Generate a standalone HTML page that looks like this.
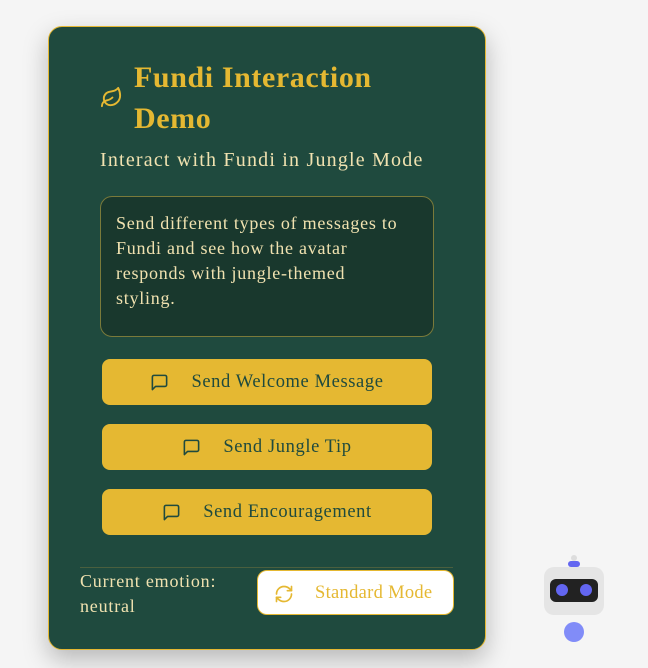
<!DOCTYPE html>
<html><head><style>
*{box-sizing:border-box;margin:0;padding:0}
body{width:648px;height:668px;background:#f5f5f5;font-family:"Liberation Serif",serif;position:relative;overflow:hidden}
.card{position:absolute;left:48px;top:26px;width:438px;height:624px;background:#1f4a3e;border:1.5px solid #e5b832;border-radius:14px;box-shadow:0 10px 25px rgba(0,0,0,.25)}
.abs{position:absolute;white-space:nowrap}
h1{position:absolute;left:134px;top:57px;color:#e5b832;font-size:30px;font-weight:bold;line-height:41px;letter-spacing:0.6px}
.sub{left:100px;top:149px;color:#f0e2b0;font-size:20px;letter-spacing:1.2px}
.box{left:100px;top:196px;width:334px;height:141px;background:#19382d;border:1px solid #7a7a3a;border-radius:12px;padding:14px 15px;color:#f0e2b0;font-size:18px;line-height:25px;letter-spacing:0.75px}
.btn{left:102px;width:330px;height:46px;background:#e5b832;border-radius:8px;color:#1f4a3e;font-size:18.5px;letter-spacing:0.6px;display:flex;align-items:center;justify-content:center;gap:22px;padding-top:1px}
.div{left:80px;top:567px;width:373px;height:1px;background:#4a5f3e}
.emo{left:80px;top:569px;color:#f0e2b0;font-size:18px;line-height:25px;letter-spacing:0.8px}
.std{left:257px;top:570px;width:197px;height:45px;background:#fff;border:1.5px solid #e5b832;border-radius:10px;color:#e5b832;font-size:18.5px;letter-spacing:0.3px;display:flex;align-items:center;padding-left:16px;gap:21px;padding-top:2px}
</style></head><body>
<div class="card"></div>
<svg class="abs" style="left:100px;top:86px" width="23" height="23" viewBox="0 0 24 24" fill="none" stroke="#e5b832" stroke-width="2" stroke-linecap="round" stroke-linejoin="round"><path d="M11 20A7 7 0 0 1 9.8 6.1C15.5 5 17 4.48 19 2c1 2 2 4.18 2 8 0 5.5-4.78 10-10 10Z"/><path d="M2 21c0-3 1.85-5.36 5.08-6C9.5 14.52 12 13 13 12"/></svg>
<h1>Fundi Interaction<br>Demo</h1>
<div class="abs sub">Interact with Fundi in Jungle Mode</div>
<div class="abs box">Send different types of messages to<br>Fundi and see how the avatar<br>responds with jungle-themed<br>styling.</div>
<div class="abs btn" style="top:359px"><svg width="19" height="19" viewBox="0 0 24 24" fill="none" stroke="#1f4a3e" stroke-width="2" stroke-linejoin="round"><path d="M21 15a2 2 0 0 1-2 2H7l-4 4V5a2 2 0 0 1 2-2h14a2 2 0 0 1 2 2z"/></svg><span>Send Welcome Message</span></div>
<div class="abs btn" style="top:424px"><svg width="19" height="19" viewBox="0 0 24 24" fill="none" stroke="#1f4a3e" stroke-width="2" stroke-linejoin="round"><path d="M21 15a2 2 0 0 1-2 2H7l-4 4V5a2 2 0 0 1 2-2h14a2 2 0 0 1 2 2z"/></svg><span>Send Jungle Tip</span></div>
<div class="abs btn" style="top:489px"><svg width="19" height="19" viewBox="0 0 24 24" fill="none" stroke="#1f4a3e" stroke-width="2" stroke-linejoin="round"><path d="M21 15a2 2 0 0 1-2 2H7l-4 4V5a2 2 0 0 1 2-2h14a2 2 0 0 1 2 2z"/></svg><span>Send Encouragement</span></div>
<div class="abs div"></div>
<div class="abs emo">Current emotion:<br>neutral</div>
<div class="abs std"><svg width="20" height="20" viewBox="0 0 24 24" fill="none" stroke="#e5b832" stroke-width="2" stroke-linecap="round" stroke-linejoin="round"><path d="M3 12a9 9 0 0 1 9-9 9.75 9.75 0 0 1 6.74 2.74L21 8"/><path d="M21 3v5h-5"/><path d="M21 12a9 9 0 0 1-9 9 9.75 9.75 0 0 1-6.74-2.74L3 16"/><path d="M8 16H3v5"/></svg><span>Standard Mode</span></div>
<div class="abs" style="left:571px;top:555px;width:6px;height:6px;border-radius:3px;background:#ddd"></div>
<div class="abs" style="left:568px;top:561px;width:12px;height:6px;border-radius:3px;background:#6366f1"></div>
<div class="abs" style="left:544px;top:567px;width:60px;height:48px;border-radius:10px;background:#e5e5e5"></div>
<div class="abs" style="left:550px;top:579px;width:48px;height:23px;border-radius:6px;background:#222"></div>
<div class="abs" style="left:556px;top:584px;width:12px;height:12px;border-radius:6px;background:#6366f1"></div>
<div class="abs" style="left:580px;top:584px;width:12px;height:12px;border-radius:6px;background:#6366f1"></div>
<div class="abs" style="left:564px;top:622px;width:20px;height:20px;border-radius:10px;background:#818cf8"></div>
</body></html>
